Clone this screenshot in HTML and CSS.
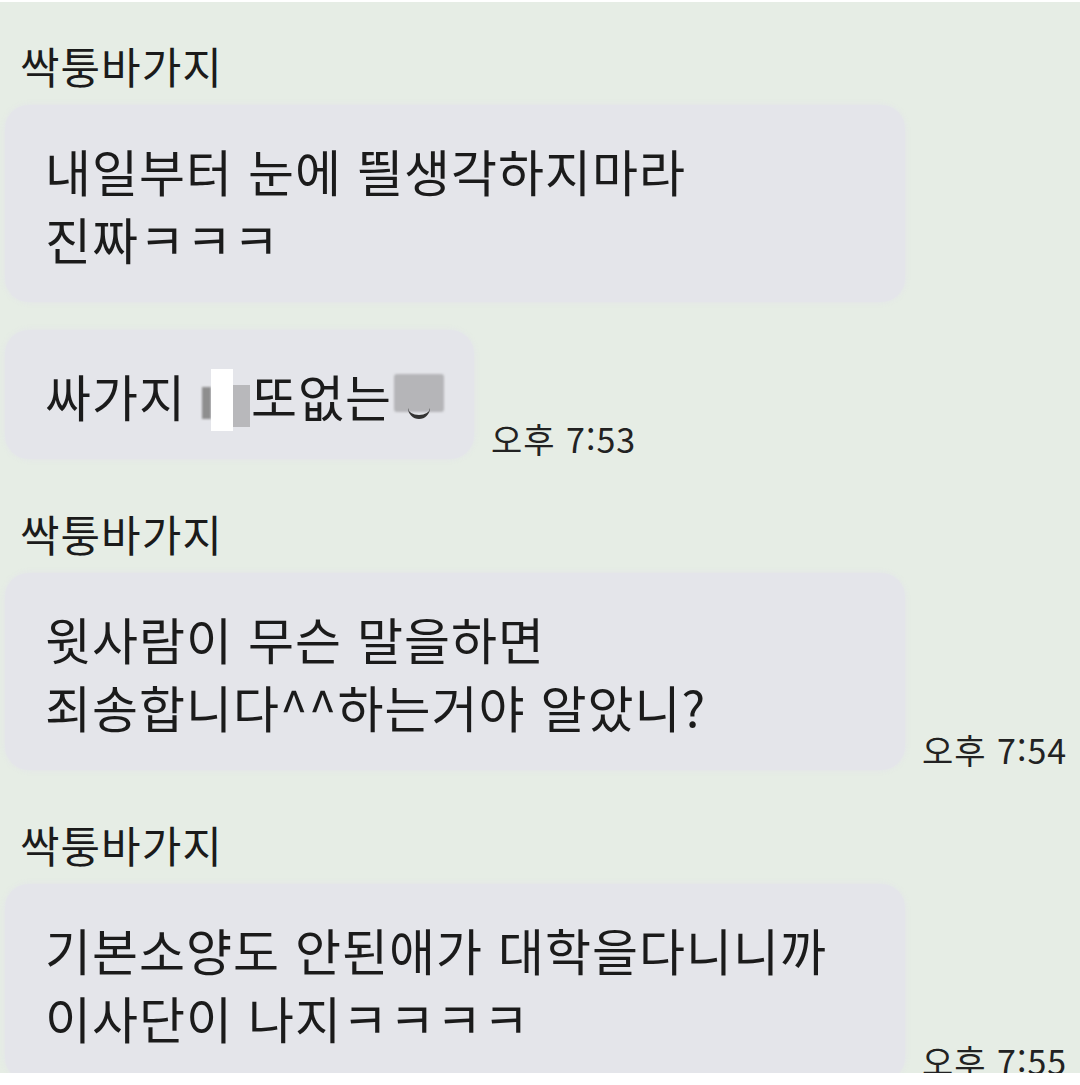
FILE: index.html
```html
<!DOCTYPE html>
<html lang="ko">
<head>
<meta charset="utf-8">
<title>채팅</title>
<link rel="stylesheet" href="styles.css">
</head>
<body>
<div class="screen">
  <div class="name">싹퉁바가지</div>
  <div class="row first">
    <div class="bubble wide">내일부터 눈에 띌생각하지마라<br>진짜ㅋㅋㅋ</div>
  </div>
  <div class="row second">
    <div class="bubble">싸가지 <span class="censor"><span class="c-dark"></span><span class="c-white"></span><span class="c-gray"></span></span>또없는<span class="blur"><span class="blur-box"></span><span class="blur-curve"></span></span></div>
    <div class="time">오후 7:53</div>
  </div>

  <div class="name">싹퉁바가지</div>
  <div class="row first">
    <div class="bubble wide">윗사람이 무슨 말을하면<br>죄송합니다^^하는거야 알았니?</div>
    <div class="time">오후 7:54</div>
  </div>

  <div class="name">싹퉁바가지</div>
  <div class="row first">
    <div class="bubble wide">기본소양도 안된애가 대학을다니니까<br>이사단이 나지ㅋㅋㅋㅋ</div>
    <div class="time">오후 7:55</div>
  </div>
</div>
</body>
</html>
```

FILE: styles.css
```css
html, body {
  margin: 0;
  padding: 0;
  background: #ffffff;
}

body {
  font-family: "Noto Sans CJK KR", "Noto Sans", sans-serif;
  color: #1b1b1b;
}

.screen {
  margin-top: 2px;
  height: 1071px;
  overflow: hidden;
  background: #e6ede5;
  padding: 38px 0 0 5px;
  box-sizing: border-box;
  display: flex;
  flex-direction: column;
}

.name {
  font-size: 43px;
  line-height: 50px;
  padding-left: 15px;
  letter-spacing: 1px;
  margin-top: 49px;
}

.name:first-child {
  margin-top: 0;
}

.row {
  display: flex;
  align-items: flex-end;
  gap: 17px;
}

.row.first {
  margin-top: 15px;
}

.row.second {
  margin-top: 28px;
}

.bubble {
  background: #e4e5ea;
  border-radius: 24px;
  font-size: 50px;
  line-height: 68px;
  padding: 31px 28px 30px 40px;
  letter-spacing: 1px;
  white-space: nowrap;
  box-shadow: 0 0 4px 1px rgba(228, 229, 234, 0.8);
}

.bubble.wide {
  width: 900px;
  box-sizing: border-box;
}

.time {
  font-size: 34px;
  line-height: 36px;
  letter-spacing: 1px;
  color: #222;
  padding-bottom: 2px;
  white-space: nowrap;
}

.censor {
  position: relative;
  display: inline-block;
  width: 50px;
  height: 68px;
  vertical-align: top;
}

.c-dark,
.c-white,
.c-gray {
  position: absolute;
}

.c-dark {
  left: 1px;
  top: 26px;
  width: 9px;
  height: 32px;
  background: #8e8e8e;
  filter: blur(1px);
}

.c-white {
  left: 10px;
  top: 8px;
  width: 22px;
  height: 62px;
  background: #ffffff;
}

.c-gray {
  left: 32px;
  top: 24px;
  width: 17px;
  height: 42px;
  background: #b8b8bb;
  filter: blur(0.5px);
}

.blur {
  position: relative;
  display: inline-block;
  width: 54px;
  height: 68px;
  vertical-align: top;
}

.blur-box {
  position: absolute;
  left: 2px;
  top: 13px;
  width: 50px;
  height: 38px;
  background: #b5b5b8;
  border-radius: 3px;
  filter: blur(1px);
}

.blur-curve {
  position: absolute;
  left: 16px;
  top: 44px;
  width: 22px;
  height: 10px;
  border-bottom: 4px solid #333;
  border-radius: 0 0 12px 12px;
}
```
